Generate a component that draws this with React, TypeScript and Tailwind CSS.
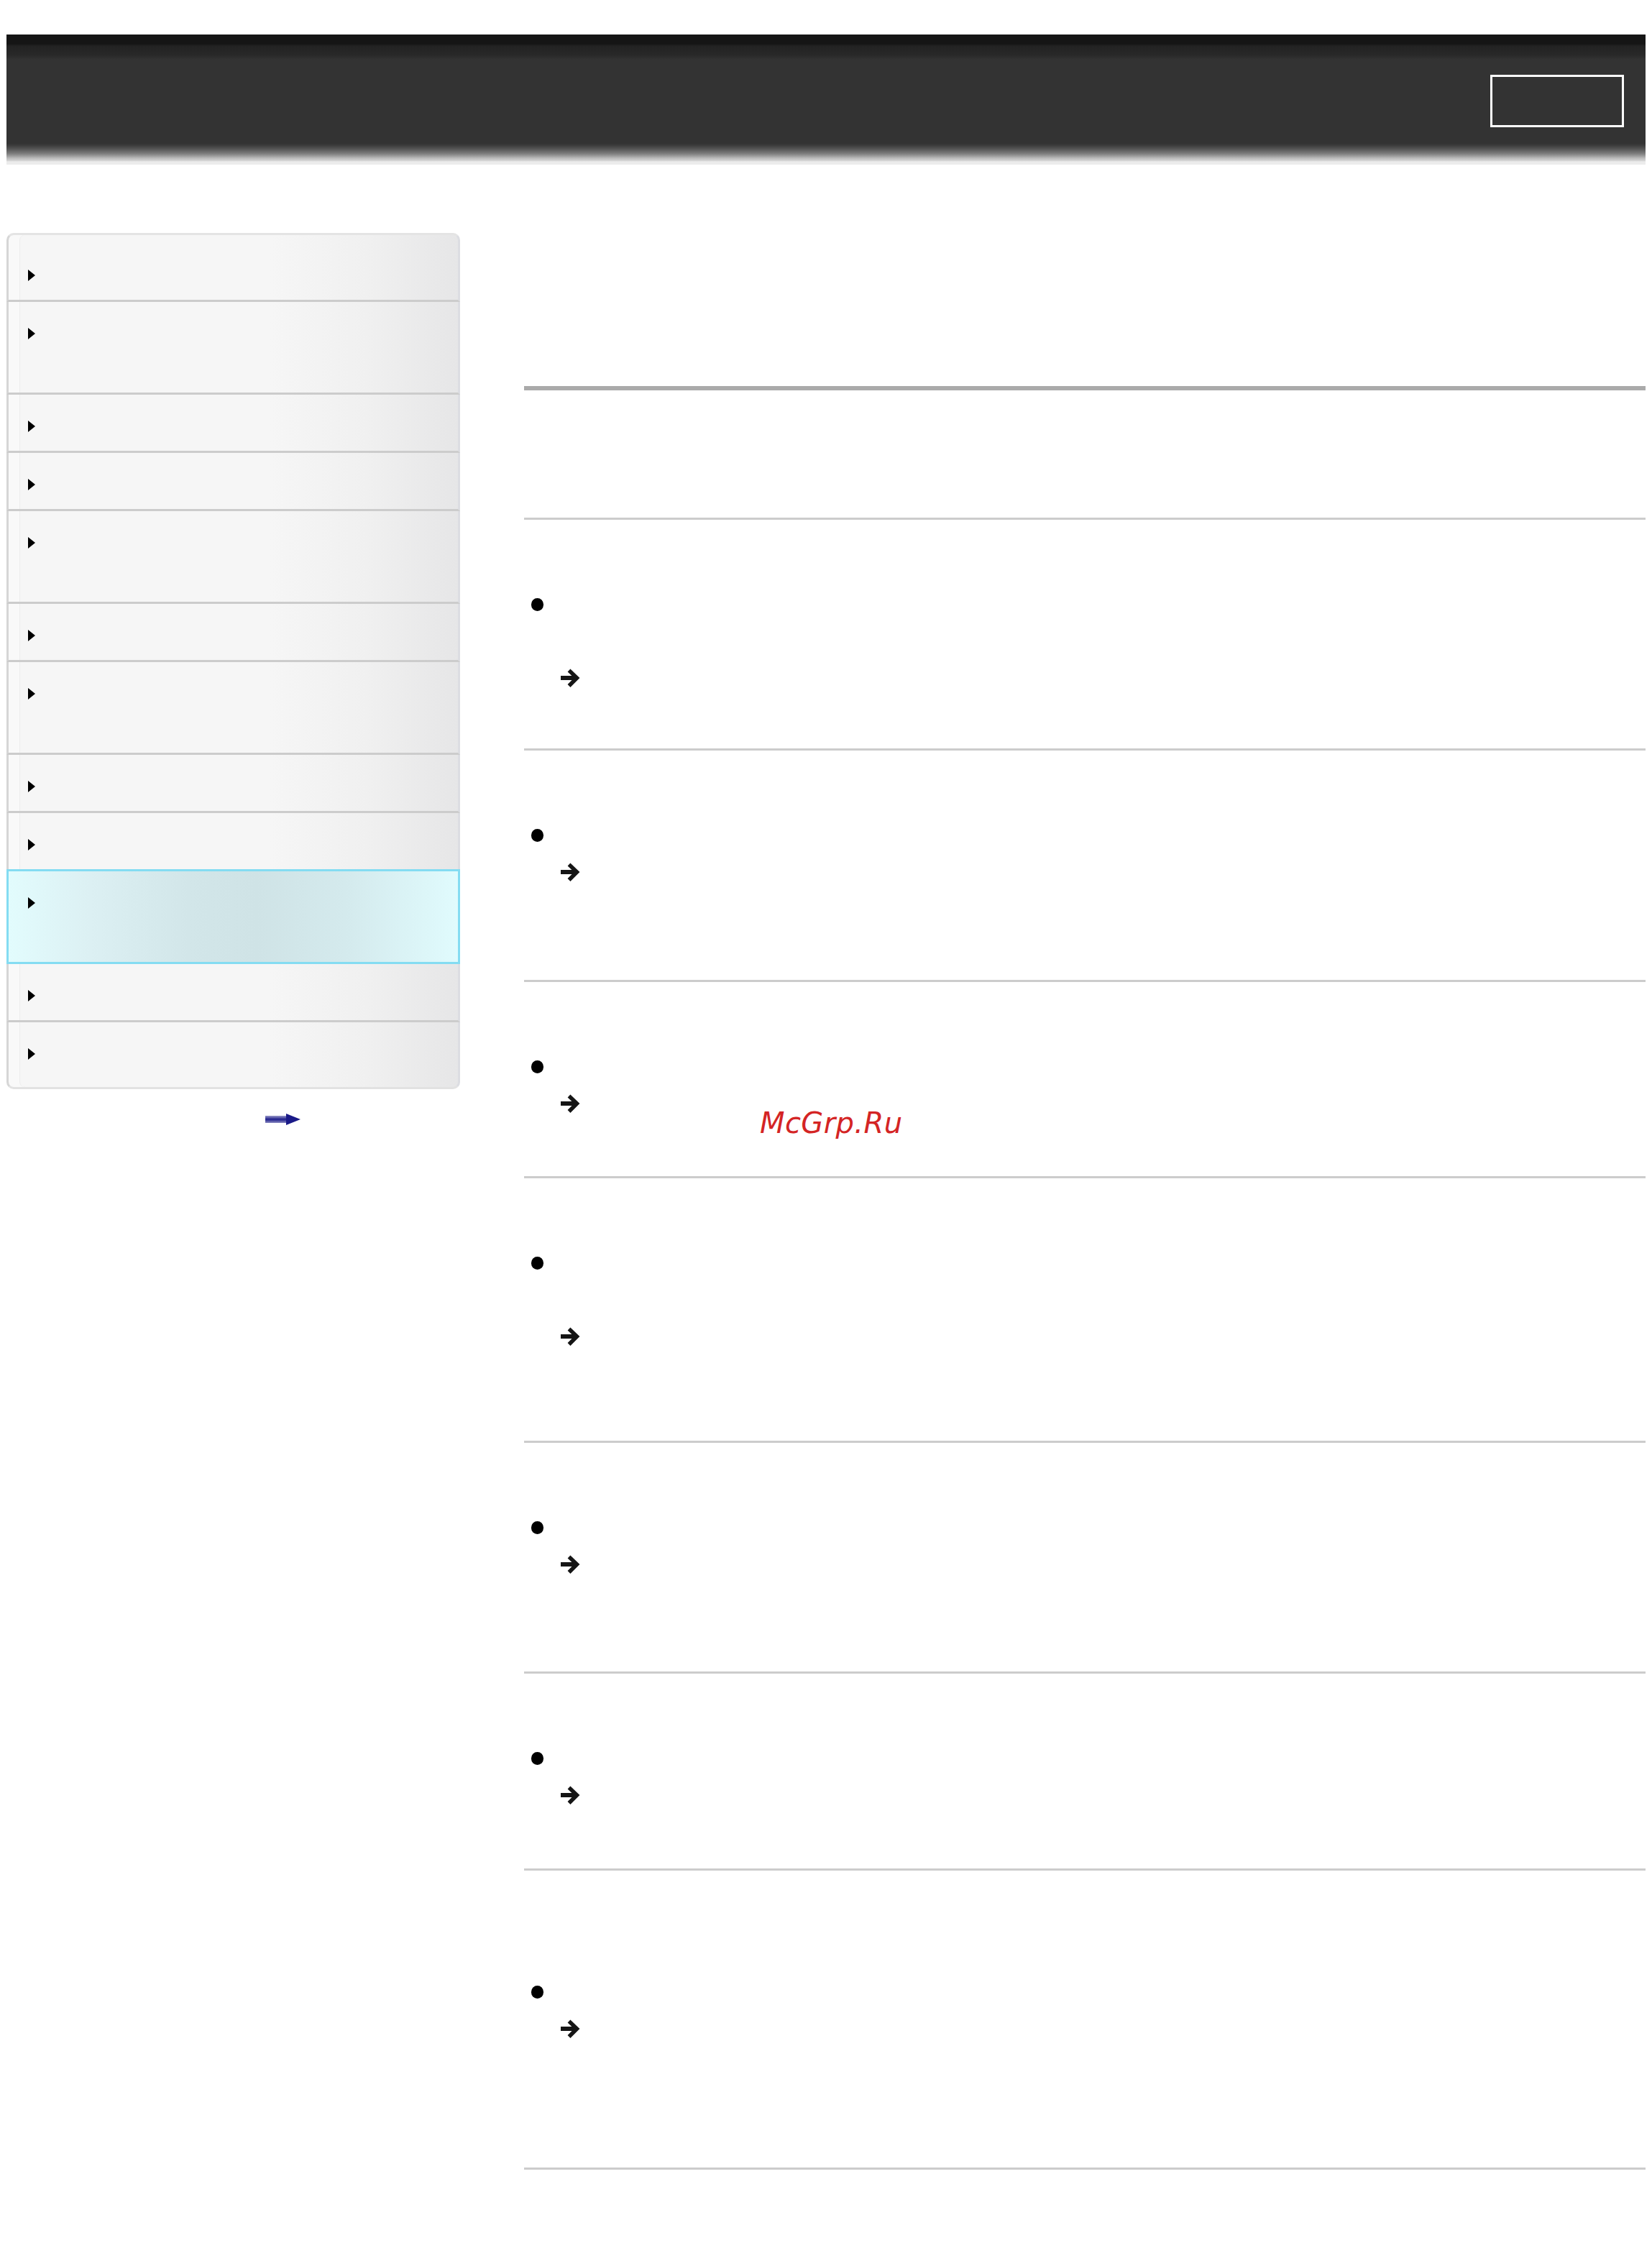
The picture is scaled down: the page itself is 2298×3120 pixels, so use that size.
import React from "react";

const rowBg =
  "bg-[linear-gradient(to_right,#f6f6f6_0%,#f6f6f6_58%,#f0f0f0_80%,#e6e6e7_100%)] shadow-[inset_15px_0_0_#f9f9f9,inset_16px_0_0_#ededed]";

type NavRow = { h: string; active?: boolean; sep: boolean };

const navRows: NavRow[] = [
  { h: "h-[81px]", sep: true },
  { h: "h-[129px]", sep: true },
  { h: "h-[81px]", sep: true },
  { h: "h-[81px]", sep: true },
  { h: "h-[129px]", sep: true },
  { h: "h-[81px]", sep: true },
  { h: "h-[129px]", sep: true },
  { h: "h-[81px]", sep: true },
  { h: "h-[78px]", sep: false },
  { h: "h-[132px]", active: true, sep: false },
  { h: "h-[81px]", sep: true },
  { h: "h-[78px]", sep: false },
];

const sections = [
  { pre: 0, bullet: 2, arrow: 1, pb: "pb-[73px]" },
  { pre: 0, bullet: 1, arrow: 2, pb: "pb-[74px]" },
  { pre: 0, bullet: 1, arrow: 1, pb: "pb-[76px]" },
  { pre: 0, bullet: 2, arrow: 2, pb: "pb-[69px]" },
  { pre: 0, bullet: 1, arrow: 2, pb: "pb-[73px]" },
  { pre: 0, bullet: 1, arrow: 1, pb: "pb-[77px]" },
  { pre: 1, bullet: 1, arrow: 3, pb: "pb-[66px]" },
];

const Triangle = () => (
  <span className="block w-0 h-0 border-y-[8px] border-y-transparent border-l-[10px] border-l-black" />
);

const ArrowIcon = () => (
  <svg viewBox="0 0 28 30" className="w-[28px] h-[30px]" fill="none">
    <path d="M1 15H22" stroke="#151515" strokeWidth="6" />
    <path d="M12.5 4.5L23.5 15L12.5 26" stroke="#151515" strokeWidth="5.5" />
  </svg>
);

const NextArrow = () => (
  <svg viewBox="0 0 50 18" className="w-[50px] h-[18px]">
    <defs>
      <linearGradient id="blueShaft" x1="0" y1="0" x2="0" y2="1">
        <stop offset="0" stopColor="#9a9ac8" />
        <stop offset="0.5" stopColor="#1e1e8c" />
        <stop offset="1" stopColor="#8a8ac0" />
      </linearGradient>
    </defs>
    <rect x="0" y="4" width="33" height="10" fill="url(#blueShaft)" />
    <path d="M29 1L49 9L29 17Z" fill="#1a1a88" />
  </svg>
);

const Sidebar = () => (
  <aside className="w-[631px] shrink-0">
    <div className={`h-[15px] rounded-t-[10px] border-t-[3px] border-x-[3px] border-t-[#e4e4e4] border-l-[#d6d6d6] border-r-[#dcdde2] ${rowBg}`} />
    {navRows.map((row, i) =>
      row.active ? (
        <div
          key={i}
          className={`${row.h} border-[3px] border-[#84dcf2] pl-[27px] pt-[36px] bg-[linear-gradient(to_right,#e2fcfd_0%,#dcf0f3_18%,#d2e6e9_40%,#cfe3e6_55%,#d4eaed_75%,#e0fbfd_100%)]`}
        >
          <Triangle />
        </div>
      ) : (
        <div
          key={i}
          className={`${row.h} border-x-[3px] border-l-[#d6d6d6] border-r-[#dcdde2] pl-[27px] pt-[36px] ${rowBg} ${
            row.sep ? "border-b-[3px] border-b-[#cccccc]" : ""
          }`}
        >
          <Triangle />
        </div>
      )
    )}
    <div className={`h-[15px] rounded-b-[10px] border-b-[3px] border-x-[3px] border-b-[#e2e2e2] border-l-[#d6d6d6] border-r-[#dcdde2] ${rowBg}`} />
    <div className="mt-[33px] pl-[360px]">
      <NextArrow />
    </div>
  </aside>
);

const Main = () => (
  <main className="relative ml-[89px] w-[1560px]">
    <div className="h-[213px]" />
    <div className="h-[6px] bg-[#aaaaaa]" />
    <div className="h-[177px]" />
    {sections.map((s, i) => (
      <section key={i} className={`border-t-[3px] border-[#cccccc] pt-[92px] ${s.pb}`}>
        {Array.from({ length: s.pre }).map((_, k) => (
          <div key={`p${k}`} className="h-[51px]" />
        ))}
        {Array.from({ length: s.bullet }).map((_, k) => (
          <div key={`b${k}`} className="h-[51px] flex items-center">
            {k === 0 && <span className="ml-[10px] w-[17px] h-[18px] rounded-full bg-black" />}
          </div>
        ))}
        {Array.from({ length: s.arrow }).map((_, k) => (
          <div key={`a${k}`} className="h-[51px] flex items-center">
            {k === 0 && (
              <span className="ml-[50px]">
                <ArrowIcon />
              </span>
            )}
          </div>
        ))}
      </section>
    ))}
    <div className="h-[3px] bg-[#cccccc]" />
    <span className="absolute left-[328px] top-[1218px] text-[40px] leading-none italic tracking-[0.4px] text-[#d42424] font-['DejaVu_Sans',sans-serif]">
      McGrp.Ru
    </span>
  </main>
);

export default function App() {
  return (
    <div className="w-[2298px] min-h-[3120px] bg-white pt-[48px] font-['DejaVu_Sans',sans-serif]">
      <header className="mx-[9px] h-[181px] bg-[linear-gradient(to_bottom,#151515_0px,#151515_13px,#222222_16px,#282828_28px,#333333_35px,#333333_151px,#3b3b3b_154px,#4a4a4a_157px,#5a5a5a_160px,#6c6c6c_163px,#808080_166px,#9c9c9c_169px,#bbbbbb_172px,#cfcfcf_175px,#ececec_177px,#ececec_181px)]">
        <div className="flex justify-end pt-[56px] pr-[30px]">
          <button className="w-[186px] h-[73px] border-[3px] border-white bg-transparent" />
        </div>
      </header>
      <div className="flex items-start px-[9px] mt-[95px]">
        <Sidebar />
        <Main />
      </div>
    </div>
  );
}
